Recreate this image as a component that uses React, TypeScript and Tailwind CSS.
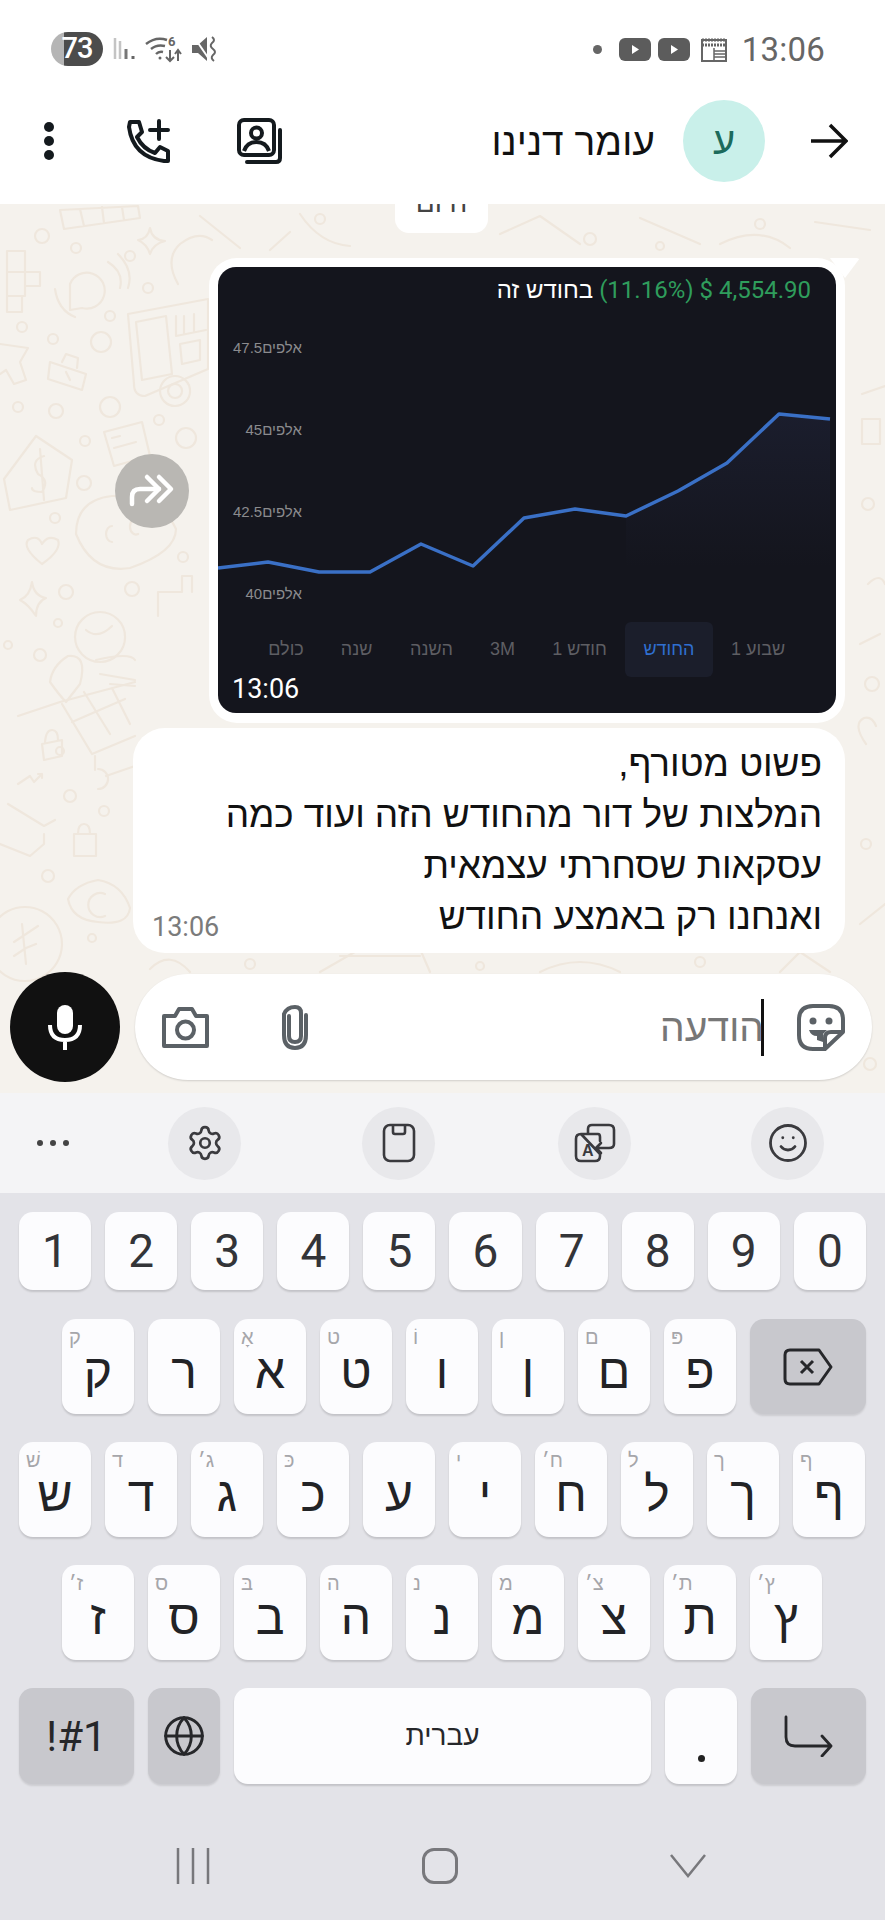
import { Settings, Smile, Globe } from "lucide-react";

const numberKeys = ["1", "2", "3", "4", "5", "6", "7", "8", "9", "0"];
const rowTwo = [["ק", "ק"], ["ר", ""], ["א", "אָ"], ["ט", "ט"], ["ו", "וֹ"], ["ן", "ן"], ["ם", "ם"], ["פ", "פּ"]];
const rowThree = [["ש", "שׁ"], ["ד", "ד"], ["ג", "ג׳"], ["כ", "כּ"], ["ע", ""], ["י", "י"], ["ח", "ח׳"], ["ל", "ל"], ["ך", "ך"], ["ף", "ף"]];
const rowFour = [["ז", "ז׳"], ["ס", "ס"], ["ב", "בּ"], ["ה", "ה"], ["נ", "נ"], ["מ", "מ"], ["צ", "צ׳"], ["ת", "ת׳"], ["ץ", "ץ׳"]];

const chartPoints = "0,301 50,295 101,305 152,305 203,277 255,299 306,251 357,242 408,249 460,224 509,196 561,147 612,152";

// small rings scattered over the wallpaper
const rings = [
  [42, 32, 7], [76, 44, 5], [130, 52, 5], [148, 84, 5], [22, 123, 5], [53, 135, 5], [101, 138, 10], [110, 112, 5],
  [18, 203, 5], [56, 207, 7], [110, 203, 10], [159, 216, 5], [85, 237, 5], [186, 234, 10], [84, 279, 7], [55, 314, 5],
  [183, 353, 5], [66, 388, 7], [132, 385, 7], [8, 441, 4], [58, 419, 4], [40, 451, 6], [60, 547, 4], [70, 592, 6],
  [104, 607, 5], [48, 672, 6], [92, 734, 4], [868, 300, 6], [872, 480, 7], [866, 640, 5], [870, 860, 6], [320, 15, 5],
  [590, 35, 6], [760, 20, 5], [660, 42, 4], [250, 760, 5], [480, 762, 4], [700, 758, 5],
];

const doodles = [
  // grid, top
  "M60 6 L138 2 L140 14 L64 25 Z M80 5 L84 22 M102 3 L104 19 M122 3 L124 16",
  // crossword
  "M7 47 H25 V68 H7 Z M7 68 H25 V92 H7 Z M7 92 H22 V108 H7 Z M25 68 H40 V82 H25 Z",
  // sparkle
  "M150 24 Q152 36 165 37 Q153 40 150 50 Q147 40 138 36 Q148 35 150 24 Z",
  // headset
  "M178 80 Q164 55 180 40 Q198 26 212 36",
  // signal bubble
  "M70 80 A18 18 0 1 1 82 104 L70 106 Z M55 85 Q58 106 75 113 M108 58 Q124 68 120 84 M118 50 Q134 66 128 84",
  // truck
  "M128 110 L208 95 V165 L145 192 Q134 192 134 180 Z M136 118 L166 112 L172 170 L142 176 Z M176 112 V132 L206 126 M184 112 V130 M194 110 V128 M180 140 L200 136 V156 L182 160 Z",
  "M175 172 A15 15 0 1 0 175.1 202 A15 15 0 1 0 175 172 Z M175 180 A7 7 0 1 0 175.1 194 A7 7 0 1 0 175 180 Z",
  // cursor
  "M0 140 L28 144 L20 158 L26 176 L14 180 L6 166 L0 170",
  // briefcase
  "M50 158 L86 170 L82 186 L48 175 Z M62 158 L66 150 L78 154 L77 164 M66 168 L70 176",
  // receipt
  "M104 228 L142 218 L150 252 L114 262 Z M112 234 L120 232 M114 244 L136 238",
  // price tag
  "M4 275 L36 232 L72 256 L66 294 L10 306 Z M44 252 Q30 256 38 270 Q50 276 42 288 Q32 288 32 284 M40 245 L44 296",
  // blob
  "M76 330 Q76 296 112 292 Q160 290 176 325 Q176 348 130 364 Q92 370 76 330 Z M112 322 A6 8 0 1 0 112.1 338 M138 315 A6 8 0 1 0 138.1 330",
  // heart
  "M42 360 Q22 344 28 336 Q38 330 42 340 Q48 330 58 336 Q62 346 42 360 Z",
  // sparkle, steps
  "M32 378 Q34 392 46 394 Q36 398 36 412 Q28 400 20 396 Q30 392 32 378 Z M158 388 H182 V372 H192 V388 M158 388 V412",
  // ball, heart, cart
  "M100 408 A25 25 0 1 0 100.1 458 A25 25 0 1 0 100 408 Z M86 426 Q98 436 112 422",
  "M80 480 Q88 450 68 452 Q52 462 50 478 Q60 492 66 498 Z M96 456 Q130 448 135 456 M100 470 L135 476 M110 480 L135 482",
  "M18 512 L60 498 L135 478 M62 500 L92 550 L135 532 M84 488 L110 530 M112 484 L130 520 M72 518 L125 495 M95 552 V566 M98 585 A10 10 0 1 0 98.1 565 M106 572 L135 562",
  // lock
  "M42 540 L62 536 L62 552 L44 556 Z M45 538 Q46 526 52 526 Q58 526 58 536",
  // wavy line, envelope
  "M18 580 L30 572 L34 578 L42 570 M38 570 H42 V574 M8 600 L44 622 L55 616 M0 640 L30 652 L44 640 V630",
  // lock 2
  "M74 630 H96 V652 H74 Z M78 630 Q78 620 84 620 Q90 620 90 630",
  // egg
  "M68 695 Q76 680 98 676 Q122 680 130 704 Q128 722 98 718 Q72 716 68 695 Z M105 690 A12 12 0 1 0 105.1 712",
  // coin
  "M25 703 A37 37 0 1 1 24.9 703 M22 720 L26 760 M14 738 L26 730 L38 722 M14 752 L26 744 L36 740",
  // right strip
  "M862 190 L885 182 M862 215 H880 V240 H862 Z M868 380 Q880 368 885 380 M860 440 L880 430 M866 540 Q852 520 864 514 Q872 512 876 522 M860 720 L885 700",
  // strip above input
  "M150 765 Q170 745 190 768 M320 768 L360 745 H420 L430 768 M340 752 H420 M540 768 Q580 748 620 768 M780 768 L800 748 L830 768",
  // strip below header
  "M200 12 L240 44 M300 10 Q320 40 350 42 M420 8 L470 10 M500 30 L540 12 L580 40 M640 14 L700 40 M720 40 Q760 20 790 44 M815 18 L870 26 M270 46 L290 28",
];

function Key({ main, hint }: { main: string; hint: string }) {
  return (
    <div className="relative flex h-[95px] w-[72px] items-end justify-center rounded-[14px] bg-[#fcfcfe] pb-[14px] shadow-[0_2px_2px_rgba(0,0,0,0.14)]">
      <span className="absolute left-[7px] top-[4px] text-[20px] leading-[28px] text-[#a6a6aa]">{hint}</span>
      <span className="text-[48px] leading-[56px] text-[#222326]">{main}</span>
    </div>
  );
}

function DarkKey({ children, className }: { children: React.ReactNode; className: string }) {
  return (
    <div className={`flex h-[96px] items-center justify-center rounded-[14px] bg-[#c8c8cd] shadow-[0_2px_2px_rgba(0,0,0,0.1)] ${className}`}>
      {children}
    </div>
  );
}

function Tab({ label, className }: { label: string; className: string }) {
  return <div className={`flex h-[55px] items-center justify-center rounded-[6px] text-[18px] ${className}`}>{label}</div>;
}

export default function App() {
  return (
    <div className="flex h-[1920px] w-[885px] flex-col overflow-hidden bg-white font-['Liberation_Sans',sans-serif]">
      {/* status bar + chat toolbar */}
      <header className="relative z-10 h-[204px] bg-white">
        <div className="flex h-[98px] items-center pl-[51px] pr-[60px] font-[Roboto,sans-serif] text-[#666]">
          <div className="flex h-[34px] w-[52px] items-center justify-center rounded-full bg-[linear-gradient(90deg,#b5b5b5_25%,#4c4c4c_25%)] text-[29px] font-medium tracking-[-1px] text-white">73</div>
          <svg className="ml-[10px]" width="24" height="26" viewBox="0 0 24 26" fill="none">
            <path d="M2 2V23M7 5V23" stroke="#c4c4c4" strokeWidth="2.5" />
            <path d="M13 13V23" stroke="#777" strokeWidth="3" />
            <path d="M20 20V23" stroke="#666" strokeWidth="3" />
          </svg>
          <svg className="ml-[8px]" width="38" height="30" viewBox="0 0 38 30" fill="none" stroke="#666" strokeWidth="2.4">
            <path d="M1 10Q11 2 22 6M6 15Q12 10 20 12M11 20Q14 17 18 18" />
            <circle cx="15" cy="24" r="1.5" fill="#666" stroke="none" />
            <text x="23" y="12" fontSize="13" fill="#666" stroke="none" fontWeight="700">6</text>
            <path d="M25 16V27M21 23L25 27L29 23M33 27V17M30 20L33 16L36 20" strokeWidth="2" />
          </svg>
          <svg className="ml-[9px]" width="26" height="28" viewBox="0 0 26 28" fill="none">
            <path d="M0 10H6L15 2V26L6 18H0Z" fill="#666" />
            <path d="M2 2L17 24" stroke="#fff" strokeWidth="2" />
            <path d="M20 2Q24 5 20 8Q17 11 21 14Q25 17 21 20Q18 23 22 26" stroke="#666" strokeWidth="2" />
          </svg>
          <div className="flex-1" />
          <div className="h-[9px] w-[9px] rounded-full bg-[#666]" />
          {[0, 1].map((i) => (
            <svg key={i} className={i === 0 ? "ml-[17px]" : "ml-[7px]"} width="32" height="23" viewBox="0 0 32 23">
              <rect width="32" height="23" rx="6" fill="#5c5c5c" />
              <path d="M13 7L20 11.5L13 16Z" fill="#fff" />
            </svg>
          ))}
          <svg className="ml-[10px]" width="28" height="26" viewBox="0 0 28 26" fill="none" stroke="#666">
            <path d="M2 4H26V25H2Z" strokeWidth="2" />
            <path d="M2 4H26M2 9H26" strokeWidth="3" strokeDasharray="2 1" />
            <path d="M14 12V25M14 15H26M14 18H26M14 21H26" strokeWidth="1.5" />
          </svg>
          <div className="ml-[14px] text-[33px] leading-none tracking-[0.2px]">13:06</div>
        </div>
        <div className="flex h-[86px] items-center pl-[44px] pr-[37px]">
          <div className="flex h-[38px] w-[11px] flex-col justify-between">
            <div className="h-[10px] w-[10px] rounded-full bg-[#141a1e]" />
            <div className="h-[10px] w-[10px] rounded-full bg-[#141a1e]" />
            <div className="h-[10px] w-[10px] rounded-full bg-[#141a1e]" />
          </div>
          <svg className="ml-[72px]" width="43" height="44" viewBox="0 0 43 44" fill="none" stroke="#141a1e" strokeWidth="4" strokeLinejoin="round" strokeLinecap="round">
            <path d="M3 3H12L15 13L10 18Q16 30 28 34L33 28L41 32V42H37Q6 38 2 8Z" />
            <path d="M32 2V20M23 11H41" />
          </svg>
          <svg className="ml-[67px]" width="46" height="47" viewBox="0 0 46 47" fill="none" stroke="#141a1e" strokeWidth="4">
            <rect x="2" y="2" width="35" height="35" rx="5" />
            <circle cx="19.5" cy="15" r="5.5" />
            <path d="M7 33Q10 24 19.5 24Q29 24 32 33" />
            <path d="M43 12V40Q43 44 39 44H10" strokeLinecap="round" />
          </svg>
          <div className="flex-1" />
          <div dir="rtl" className="text-[39px] leading-none text-[#111]">עומר דנינו</div>
          <div className="ml-[28px] flex h-[82px] w-[82px] items-center justify-center rounded-full bg-[#c9f0ea] text-[38px] text-[#1c6b5c]">ע</div>
          <svg className="ml-[46px]" width="37" height="36" viewBox="0 0 37 36" fill="none" stroke="#111" strokeWidth="3.5">
            <path d="M0 18H35M19 2L35 18L19 34" />
          </svg>
        </div>
      </header>

      {/* conversation */}
      <main className="relative h-[889px] bg-[#f5f2ed]">
        <svg className="absolute inset-0" width="885" height="889" viewBox="0 0 885 889" fill="none" stroke="#efe7dd" strokeWidth="2.2" strokeLinejoin="round" strokeLinecap="round">
          {doodles.map((d) => (
            <path key={d} d={d} />
          ))}
          {rings.map(([x, y, r]) => (
            <circle key={`${x}-${y}`} cx={x} cy={y} r={r} />
          ))}
        </svg>
        <div className="relative flex h-full flex-col">
          <div dir="rtl" className="-mt-[31px] ml-[395px] flex h-[60px] w-[93px] items-center justify-center rounded-[14px] bg-white text-[28px] text-[#444]">היום</div>

          <div className="mt-[25px] flex items-center justify-end pr-[40px]">
            <div className="flex h-[74px] w-[74px] items-center justify-center rounded-full bg-[#b9b7b3]">
              <svg width="46" height="40" viewBox="0 0 46 40" fill="none" stroke="#fff" strokeWidth="4.5" strokeLinecap="round" strokeLinejoin="round">
                <path d="M3 33V26Q3 18 11 18H30" />
                <path d="M18 6L30 18L18 30M30 6L42 18L30 30" />
              </svg>
            </div>
            <div className="relative ml-[20px] h-[465px] w-[636px] rounded-[28px] bg-white p-[9px]">
              <div className="absolute right-[-15px] top-0 h-[20px] w-[30px] rounded-tr-[4px] bg-white [clip-path:polygon(0_0,100%_0,50%_100%)]" />
              <div className="relative flex h-[446px] w-[618px] flex-col rounded-[18px] bg-[#14151d]">
                <div dir="rtl" className="flex h-[37px] items-end gap-[6px] pr-[25px] text-[24px] leading-[28px] text-[#2f9d5c]">
                  <span dir="ltr" className="font-[Roboto,sans-serif]">$ 4,554.90</span>
                  <span dir="ltr" className="font-[Roboto,sans-serif]">(11.16%)</span>
                  <span className="text-white">בחודש זה</span>
                </div>
                <svg className="absolute inset-0" width="618" height="446" viewBox="0 0 618 446" fill="none">
                  <defs>
                    <linearGradient id="chartFill" x1="0" y1="0" x2="0" y2="1">
                      <stop offset="0" stopColor="#252a45" stopOpacity="0.4" />
                      <stop offset="1" stopColor="#252a45" stopOpacity="0" />
                    </linearGradient>
                  </defs>
                  <polygon points="408,249 460,224 509,196 561,147 612,152 612,300 408,300" fill="url(#chartFill)" />
                  <polyline points={chartPoints} stroke="#3a70c6" strokeWidth="3.5" strokeLinejoin="round" />
                </svg>
                <div className="absolute left-[15px] top-[71px] flex h-[266px] flex-col justify-between text-[15px] leading-[20px] text-[#8b8b8e]">
                  <span dir="rtl">אלפים47.5</span>
                  <span dir="rtl">אלפים45</span>
                  <span dir="rtl">אלפים42.5</span>
                  <span dir="rtl">אלפים40</span>
                </div>
                <div dir="rtl" className="absolute left-[33px] top-[355px] flex text-[#5e5e63]">
                  <Tab label="שבוע 1" className="w-[90px]" />
                  <Tab label="החודש" className="w-[88px] bg-[#1b1e2b] text-[#2f6fd0]" />
                  <Tab label="חודש 1" className="w-[91px]" />
                  <Tab label="3M" className="w-[63px]" />
                  <Tab label="השנה" className="w-[79px]" />
                  <Tab label="שנה" className="w-[71px]" />
                  <Tab label="כולם" className="w-[70px]" />
                </div>
                <div className="absolute bottom-[8px] left-[14px] font-[Roboto,sans-serif] text-[27px] leading-[32px] text-white">13:06</div>
              </div>
            </div>
          </div>

          <div className="relative ml-[133px] mt-[5px] h-[225px] w-[712px] rounded-[32px] bg-white pr-[23px] pt-[10px]">
            <div dir="rtl" className="text-[37px] tracking-[-0.1px] leading-[51px] text-[#111]">
              <div>פשוט מטורף,</div>
              <div>המלצות של דור מהחודש הזה ועוד כמה</div>
              <div>עסקאות שסחרתי עצמאית</div>
              <div>ואנחנו רק באמצע החודש</div>
            </div>
            <div className="absolute bottom-[10px] left-[19px] font-[Roboto,sans-serif] text-[27px] leading-[32px] text-[#7b7b7b]">13:06</div>
          </div>

          <div className="ml-[10px] mt-[19px] flex items-center">
            <div className="flex h-[110px] w-[110px] items-center justify-center rounded-full bg-[#111]">
              <svg width="34" height="46" viewBox="0 0 34 46" fill="none" stroke="#fff">
                <rect x="9" y="1" width="16" height="29" rx="8" fill="#fff" stroke="none" />
                <path d="M2 21Q2 36 17 36Q32 36 32 21M17 36V46" strokeWidth="4" />
              </svg>
            </div>
            <div className="ml-[15px] flex h-[106px] w-[737px] items-center rounded-full bg-white pl-[27px] pr-[27px] shadow-[0_1px_2px_rgba(0,0,0,0.15)]">
              <svg width="47" height="42" viewBox="0 0 47 42" fill="none" stroke="#5b6166" strokeWidth="4" strokeLinejoin="round">
                <path d="M2 10H13L17 3H30L34 10H45V40H2Z" />
                <circle cx="23.5" cy="24" r="8.5" />
              </svg>
              <svg className="ml-[71px]" width="30" height="46" viewBox="0 0 30 46" fill="none" stroke="#5b6166" strokeWidth="4" strokeLinecap="round">
                <path d="M9 12V32Q9 38 15 38Q21 38 21 32V9Q21 3 15 3Q7 3 4 10V31Q4 44 15 44Q26 44 26 31V11" />
              </svg>
              <div className="flex-1" />
              <div dir="rtl" className="flex items-center">
                <div className="h-[57px] w-[3px] bg-[#111]" />
                <span className="-mr-[3px] text-[39px] leading-none text-[#777]">הודעה</span>
              </div>
              <svg className="ml-[33px]" width="48" height="47" viewBox="0 0 48 47" fill="none" stroke="#5b6166" strokeWidth="4" strokeLinejoin="round">
                <path d="M16 2H32Q46 2 46 16V28L28 45H16Q2 45 2 31V16Q2 2 16 2Z" />
                <circle cx="16" cy="17" r="3.5" fill="#5b6166" stroke="none" />
                <circle cx="32" cy="17" r="3.5" fill="#5b6166" stroke="none" />
                <path d="M12 26H30L26 30V38L20 36V32Q14 32 12 26Z" fill="#5b6166" stroke="none" />
                <path d="M46 28H34Q28 28 28 34V45" />
              </svg>
            </div>
          </div>
        </div>
      </main>

      {/* keyboard toolbar */}
      <div className="flex h-[100px] items-center bg-[#f4f4f6] pl-[37px] text-[#3a3a3e]">
        <div className="flex w-[32px] justify-between">
          <div className="h-[6px] w-[6px] rounded-full bg-[#444]" />
          <div className="h-[6px] w-[6px] rounded-full bg-[#444]" />
          <div className="h-[6px] w-[6px] rounded-full bg-[#444]" />
        </div>
        <div className="ml-[99px] flex h-[73px] w-[73px] items-center justify-center rounded-full bg-[#e8e8eb]">
          <Settings size={38} strokeWidth={1.7} />
        </div>
        <div className="ml-[121px] flex h-[73px] w-[73px] items-center justify-center rounded-full bg-[#e8e8eb]">
          <svg width="34" height="40" viewBox="0 0 34 40" fill="none" stroke="#3a3a3e" strokeWidth="2.6" strokeLinejoin="round">
            <rect x="2" y="2" width="30" height="36" rx="6" />
            <path d="M11 2V9Q11 11 13 11H21Q23 11 23 9V2" />
          </svg>
        </div>
        <div className="ml-[123px] flex h-[73px] w-[73px] items-center justify-center rounded-full bg-[#e8e8eb]">
          <svg width="42" height="40" viewBox="0 0 42 40" fill="none" stroke="#3a3a3e" strokeWidth="2.6" strokeLinejoin="round" strokeLinecap="round">
            <path d="M14 10V6Q14 2 18 2H35Q40 2 40 7V21Q40 25 35 25H22M27 20L22 25L27 30" />
            <path d="M7 11H24Q26 11 26 14V18M26 31V33Q26 38 21 38H7Q2 38 2 33V16Q2 11 7 11Z" />
            <text x="8" y="33" fontSize="16" fontWeight="700" fill="#3a3a3e" stroke="none">A</text>
          </svg>
        </div>
        <div className="ml-[120px] flex h-[73px] w-[73px] items-center justify-center rounded-full bg-[#e8e8eb]">
          <Smile size={42} strokeWidth={1.6} />
        </div>
      </div>

      {/* keyboard */}
      <div className="flex-1 bg-[#e3e3e8] px-[19px] pt-[19px]">
        <div className="flex gap-[14px]">
          {numberKeys.map((k) => (
            <div key={k} className="flex h-[78px] flex-1 items-center justify-center rounded-[14px] bg-[#fcfcfe] font-[Roboto,sans-serif] text-[46px] text-[#333438] shadow-[0_2px_2px_rgba(0,0,0,0.14)]">{k}</div>
          ))}
        </div>
        <div className="mt-[29px] flex gap-[14px] pl-[43px]">
          {rowTwo.map(([m, h]) => (
            <Key key={m} main={m} hint={h} />
          ))}
          <div className="flex h-[95px] flex-1 items-center justify-center rounded-[14px] bg-[#c8c8cd] shadow-[0_2px_2px_rgba(0,0,0,0.1)]">
            <svg width="50" height="38" viewBox="0 0 50 38" fill="none" stroke="#26272a" strokeWidth="3" strokeLinejoin="round">
              <path d="M7 2H36L48 19L36 36H7Q2 36 2 31V7Q2 2 7 2Z" />
              <path d="M18 13L30 25M30 13L18 25" />
            </svg>
          </div>
        </div>
        <div className="mt-[28px] flex gap-[14px]">
          {rowThree.map(([m, h]) => (
            <Key key={m} main={m} hint={h} />
          ))}
        </div>
        <div className="mt-[28px] flex gap-[14px] pl-[43px]">
          {rowFour.map(([m, h]) => (
            <Key key={m} main={m} hint={h} />
          ))}
        </div>
        <div className="mt-[28px] flex gap-[14px]">
          <DarkKey className="w-[115px] font-[Roboto,sans-serif] text-[42px] text-[#26272a]">!#1</DarkKey>
          <DarkKey className="w-[72px] text-[#26272a]">
            <Globe size={44} strokeWidth={1.6} />
          </DarkKey>
          <div dir="rtl" className="flex h-[96px] flex-1 items-center justify-center rounded-[14px] bg-[#fcfcfe] text-[28px] text-[#26272a] shadow-[0_2px_2px_rgba(0,0,0,0.14)]">עברית</div>
          <div className="flex h-[96px] w-[72px] items-end justify-center rounded-[14px] bg-[#fcfcfe] pb-[22px] shadow-[0_2px_2px_rgba(0,0,0,0.14)]">
            <div className="h-[7px] w-[7px] rounded-full bg-[#222]" />
          </div>
          <DarkKey className="w-[115px]">
            <svg width="50" height="42" viewBox="0 0 50 42" fill="none" stroke="#26272a" strokeWidth="2.8" strokeLinecap="round" strokeLinejoin="round">
              <path d="M2 2V22Q2 31 11 31H47M38 21L47 31L38 41" />
            </svg>
          </DarkKey>
        </div>
        {/* nav bar */}
        <div className="mt-[64px] flex items-center">
          <svg className="ml-[157px]" width="34" height="36" viewBox="0 0 34 36" stroke="#78787c" strokeWidth="2.5">
            <path d="M2 0V36M17 0V36M32 0V36" />
          </svg>
          <div className="ml-[212px] h-[36px] w-[36px] rounded-[12px] border-[3px] border-[#78787c]" />
          <svg className="ml-[212px]" width="36" height="24" viewBox="0 0 36 24" fill="none" stroke="#78787c" strokeWidth="2.5">
            <path d="M1 1L18 22L35 1" />
          </svg>
        </div>
      </div>
    </div>
  );
}
